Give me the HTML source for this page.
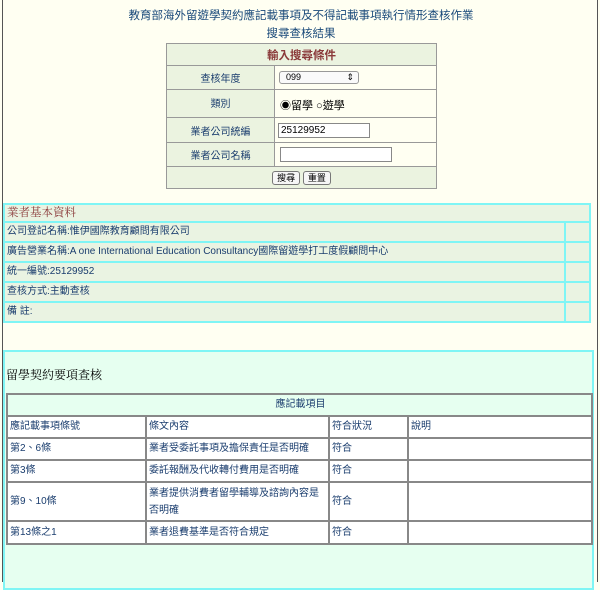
<!DOCTYPE html>
<html><head><meta charset="utf-8"><style>
*{box-sizing:border-box;margin:0;padding:0}
body{width:600px;height:582px;background:#fffff2;font-family:"Liberation Sans","Noto Sans CJK TC",sans-serif;font-size:10px;color:#1a3d6e;position:relative;overflow:hidden}
.a{position:absolute}
.lb{top:0;width:1px;height:582px;background:#555}
.t1{left:0;width:602px;text-align:center;font-size:11.5px;color:#1a4a7a;line-height:14px}
table{border-collapse:collapse;position:absolute}
td{vertical-align:middle}
.s td{border:1px solid #999;background:#fffff2;font-size:10px;padding:0}
.s td.l{background:#ebf3e0;text-align:center;color:#1a3d6e}
.s td.h{background:#ebf3e0;text-align:center;color:#8a3a3a;font-size:11.5px;font-weight:bold}
.b td{border:2px solid #7ff5f5;background:#eaf3e2;padding:0 0 0 2px;font-size:10px;white-space:nowrap;line-height:12px}
.sec{left:3px;top:350px;width:591px;height:240px;border:2px solid #7ff5f5;background:#e6fff0}
.c td{border:2px solid #888;background:#fff;padding:0 0 0 2px;font-size:10px;white-space:nowrap;line-height:12px}
input.tx{height:15px;border:1px solid #888;font-size:10px;padding-left:2px;font-family:"Liberation Sans",sans-serif;vertical-align:middle}
.btn{display:inline-block;border:1px solid #777;border-radius:3px;background:#f6f6f6;font-size:9px;padding:0 4px;line-height:12px;color:#000}
</style></head><body>
<div class="a lb" style="left:2px"></div>
<div class="a lb" style="left:597px"></div>
<div class="a t1" style="top:9px">教育部海外留遊學契約應記載事項及不得記載事項執行情形查核作業</div>
<div class="a t1" style="top:27px">搜尋查核結果</div>
<table class="s" style="left:166px;top:43px;width:271px">
<tr style="height:22px"><td colspan="2" class="h">輸入搜尋條件</td></tr>
<tr style="height:24px"><td class="l" style="width:108px">查核年度</td><td style="padding-left:4px"><span style="display:inline-block;width:80px;height:13px;border:1px solid #999;border-radius:3px;background:#fafafa;font-size:9px;padding-left:6px;line-height:11px;color:#000;vertical-align:middle">099<span style="float:right;margin-right:4px">⇕</span></span></td></tr>
<tr style="height:28px"><td class="l" style="vertical-align:top;padding-top:5px">類別</td><td style="padding-left:5px;padding-top:3px;font-size:11px;color:#000">◉留學 ○遊學</td></tr>
<tr style="height:25px"><td class="l">業者公司統編</td><td style="padding-left:3px"><input class="tx" style="width:92px" value="25129952"></td></tr>
<tr style="height:24px"><td class="l">業者公司名稱</td><td style="padding-left:5px"><input class="tx" style="width:112px"></td></tr>
<tr style="height:22px"><td colspan="2" class="l"><span class="btn">搜尋</span> <span class="btn">重置</span></td></tr>
</table>
<table class="b" style="left:3px;top:203px;width:588px">
<tr style="height:18px"><td colspan="2" style="color:#8a3a3a;font-family:'Liberation Serif','Noto Serif CJK SC',serif;font-size:11.5px">業者基本資料</td></tr>
<tr style="height:20px"><td>公司登記名稱:惟伊國際教育顧問有限公司</td><td style="width:25px"></td></tr>
<tr style="height:20px"><td>廣告營業名稱:A one International Education Consultancy國際留遊學打工度假顧問中心</td><td></td></tr>
<tr style="height:20px"><td>統一編號:25129952</td><td></td></tr>
<tr style="height:20px"><td>查核方式:主動查核</td><td></td></tr>
<tr style="height:20px"><td>備 註:</td><td></td></tr>
</table>
<div class="a sec"></div>
<div class="a" style="left:6px;top:366px;font-size:12px;color:#000;font-family:'Liberation Serif','Noto Serif CJK SC',serif">留學契約要項查核</div>
<table class="c" style="left:6px;top:393px;width:587px;table-layout:fixed">
<col style="width:139px"><col style="width:183px"><col style="width:79px"><col>
<tr style="height:22px"><td colspan="4" style="text-align:center;background:#e6fff0">應記載項目</td></tr>
<tr style="height:22px"><td>應記載事項條號</td><td>條文內容</td><td>符合狀況</td><td>說明</td></tr>
<tr style="height:22px"><td>第2、6條</td><td>業者受委託事項及擔保責任是否明確</td><td>符合</td><td></td></tr>
<tr style="height:22px"><td>第3條</td><td>委託報酬及代收轉付費用是否明確</td><td>符合</td><td></td></tr>
<tr style="height:39px"><td>第9、10條</td><td style="line-height:17px;white-space:normal">業者提供消費者留學輔導及諮詢內容是否明確</td><td>符合</td><td></td></tr>
<tr style="height:23px"><td>第13條之1</td><td>業者退費基準是否符合規定</td><td>符合</td><td></td></tr>
</table>
</body></html>
